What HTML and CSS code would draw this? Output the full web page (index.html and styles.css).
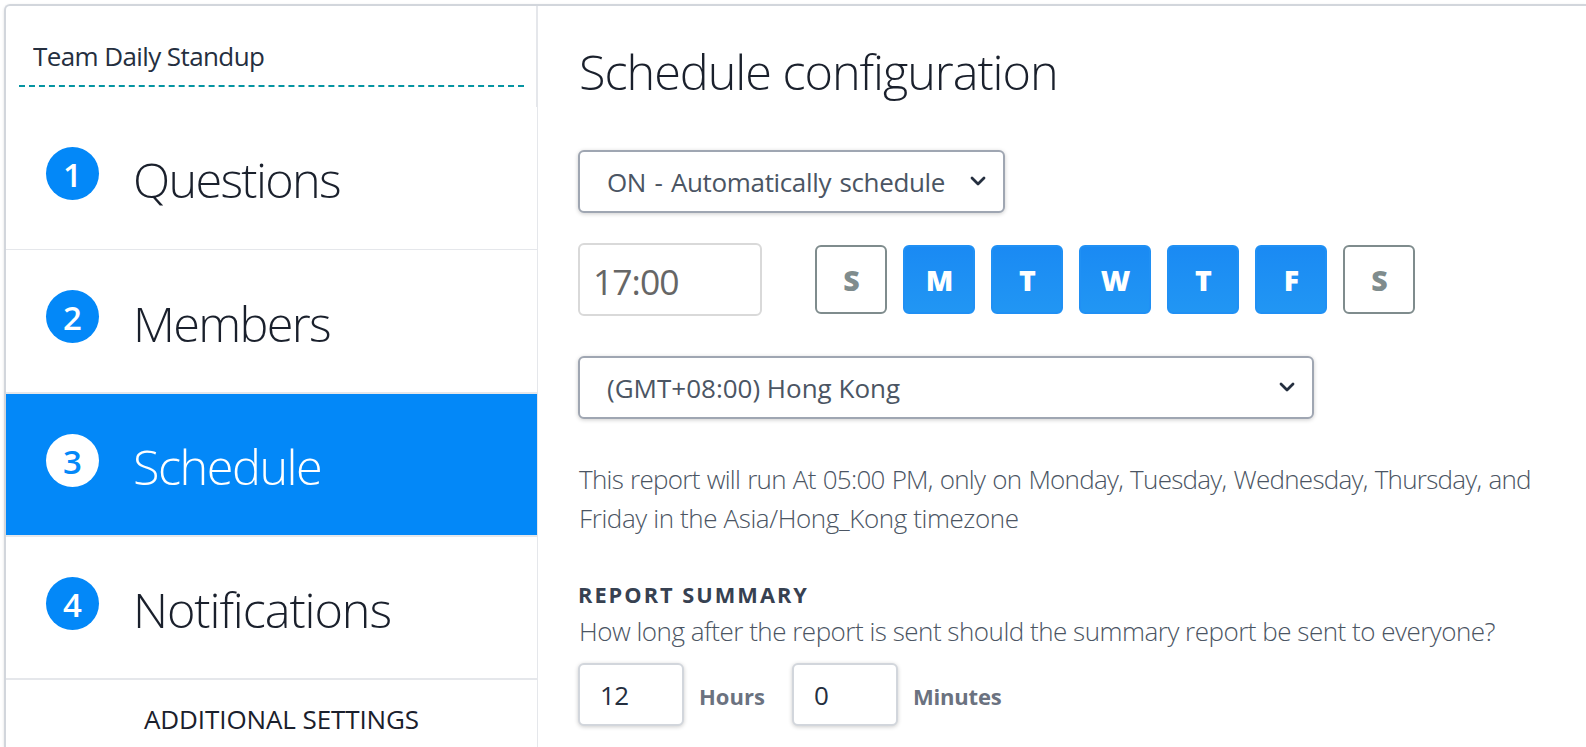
FILE: index.html
```
<!DOCTYPE html>
<html lang="en">
<head>
    <meta charset="UTF-8">
    <meta name="viewport" content="width=device-width, initial-scale=1.0">
    <title>Team Daily Standup</title>
    <link rel="stylesheet" href="styles.css">
</head>
<body>
    <div class="card">
        <div class="sidebar">
            <div class="sidebar-header">
                <input type="text" class="report-name" value="Team Daily Standup">
            </div>
            <ul class="steps">
                <li class="step">
                    <span class="step-number">1</span>
                    <span class="step-label">Questions</span>
                </li>
                <li class="step step-tall">
                    <span class="step-number">2</span>
                    <span class="step-label">Members</span>
                </li>
                <li class="step active">
                    <span class="step-number">3</span>
                    <span class="step-label">Schedule</span>
                </li>
                <li class="step step-last">
                    <span class="step-number">4</span>
                    <span class="step-label wide">Notifications</span>
                </li>
                <li class="additional">ADDITIONAL SETTINGS</li>
            </ul>
        </div>

        <div class="content">
            <h1>Schedule configuration</h1>

            <div class="select-box mode-select">
                <select>
                    <option>ON - Automatically schedule</option>
                    <option>OFF</option>
                </select>
                <svg class="chevron" viewBox="0 0 16 11"><path d="M2 2l6 6 6-6"/></svg>
            </div>

            <div class="time-row">
                <input type="text" class="time-input" value="17:00">
                <div class="days">
                    <button class="day">S</button>
                    <button class="day selected">M</button>
                    <button class="day selected">T</button>
                    <button class="day selected">W</button>
                    <button class="day selected">T</button>
                    <button class="day selected">F</button>
                    <button class="day">S</button>
                </div>
            </div>

            <div class="select-box zone-select">
                <select>
                    <option>(GMT+08:00) Hong Kong</option>
                </select>
                <svg class="chevron" viewBox="0 0 16 11"><path d="M2 2l6 6 6-6"/></svg>
            </div>

            <p class="run-info">This report will run At 05:00 PM, only on Monday, Tuesday, Wednesday, Thursday, and<br><span class="timezone">Friday in the Asia/Hong_Kong timezone</span></p>

            <h2>REPORT SUMMARY</h2>
            <p class="summary-info">How long after the report is sent should the summary report be sent to everyone?</p>
            <div class="delay-row">
                <input type="text" class="delay-input" value="12">
                <label class="hours">Hours</label>
                <input type="text" class="delay-input" value="0">
                <label>Minutes</label>
            </div>
        </div>
    </div>
</body>
</html>
```

FILE: styles.css
```
* {
    margin: 0;
    padding: 0;
    box-sizing: border-box;
    font-family: 'Open Sans', 'Noto Sans', sans-serif;
}

body {
    height: 100vh;
    padding: 4px 0 0 4px;
    background-color: #fff;
    color: #1a202c;
}

.card {
    display: flex;
    height: 100%;
    border: 2px solid #d2d6dc;
    border-right: none;
    border-bottom: none;
    border-radius: 6px 0 0 0;
    box-shadow: 0 1px 3px rgba(0, 0, 0, 0.12);
}

/* Sidebar */
.sidebar {
    display: flex;
    flex-direction: column;
    flex: none;
    width: 532px;
}

.sidebar-header {
    height: 101px;
    padding: 30px 12px 0 13px;
    border-right: 2px solid #e5e7eb;
}

.report-name {
    width: 100%;
    height: 51px;
    padding: 0 14px 10px;
    border: none;
    border-bottom: 2px dashed #0694a2;
    background: none;
    color: #252f3f;
    font-size: 26px;
    letter-spacing: -0.6px;
    outline: none;
}

.steps {
    flex: 1;
    list-style: none;
    border-right: 1px solid #e5e7eb;
}

.step {
    display: flex;
    gap: 34px;
    height: 143px;
    padding: 40px 40px 0;
    border-bottom: 1px solid #e5e7eb;
}

.step-tall {
    height: 144px;
    border-bottom-width: 2px;
}

.step-last {
    border-bottom-width: 2px;
}

.step-number {
    width: 53px;
    height: 53px;
    border-radius: 50%;
    background-color: #0388f8;
    color: #fff;
    font-size: 33px;
    font-weight: 600;
    line-height: 55px;
    text-align: center;
}

.step-label {
    padding-top: 2px;
    font-size: 48.6px;
    font-weight: 300;
    line-height: 60px;
    letter-spacing: -1.7px;
}

.step-tall .step-label {
    padding-top: 3px;
}

.step-label.wide {
    letter-spacing: -1.1px;
}

.step.active {
    background-color: #0388f8;
    background-clip: padding-box;
    border-bottom-width: 2px;
    color: #fff;
}

.step.active .step-label {
    letter-spacing: -1.5px;
}

.step.active .step-number {
    background-color: #fff;
    color: #0388f8;
}

.additional {
    padding: 20px 0 0 138px;
    font-size: 26px;
    line-height: 39px;
    letter-spacing: -0.1px;
}

/* Content */
.content {
    flex: 1;
    padding: 35px 0 0 40px;
}

h1 {
    margin-bottom: 49px;
    padding-left: 1px;
    font-size: 48.6px;
    font-weight: 300;
    line-height: 60px;
    letter-spacing: -1.05px;
}

.select-box {
    position: relative;
    height: 63px;
}

.select-box select {
    width: 100%;
    height: 100%;
    padding: 0 60px 0 27px;
    border: 2px solid #9fa6b2;
    border-radius: 6px;
    background-color: #fff;
    box-shadow: 0 1px 4px rgba(0, 0, 0, 0.2);
    color: #4b5563;
    font-size: 26px;
    appearance: none;
}

.mode-select {
    width: 427px;
}

.mode-select select {
    padding-right: 20px;
    letter-spacing: -0.35px;
    word-spacing: 2px;
}

.zone-select {
    width: 736px;
}

.chevron {
    position: absolute;
    top: 26px;
    right: 19px;
    width: 16px;
    height: 11px;
    fill: none;
    stroke: #252f3f;
    stroke-width: 2.8;
    stroke-linecap: round;
    stroke-linejoin: round;
}

.time-row {
    display: flex;
    align-items: flex-start;
    gap: 53px;
    margin: 30px 0 40px;
}

.time-input {
    width: 184px;
    height: 73px;
    padding: 2px 13px 0;
    border: 2px solid #d9d9d9;
    border-radius: 6px;
    color: #666;
    font-size: 35.5px;
    letter-spacing: -1px;
}

.days {
    display: flex;
    gap: 16px;
    padding-top: 2px;
}

.day {
    width: 72px;
    height: 69px;
    padding: 1px 0 0 1px;
    border: 2px solid #7f8c8d;
    border-radius: 6px;
    background-color: #fff;
    color: #7f8c8d;
    font-size: 28.5px;
    font-weight: 800;
}

.day.selected {
    border-color: #2090f4;
    background: linear-gradient(#1a8af3, #2196f3);
    color: #fff;
}

.run-info,
.summary-info {
    color: #4b5563;
    font-size: 26px;
    font-weight: 300;
    line-height: 39px;
    white-space: nowrap;
}

.run-info {
    margin: 41px 0 40px;
    padding-left: 1px;
    letter-spacing: -0.73px;
    word-spacing: 1px;
}

.timezone {
    letter-spacing: -0.4px;
    word-spacing: 0;
}

.summary-info {
    padding: 1px 0 12px 1px;
    letter-spacing: -0.5px;
}

h2 {
    color: #374151;
    font-size: 21.8px;
    font-weight: 700;
    line-height: 33px;
    letter-spacing: 2px;
}

.delay-row {
    display: flex;
    align-items: center;
}

.delay-input {
    width: 106px;
    height: 63px;
    margin-right: 15px;
    padding: 0 20px;
    border: 2px solid #d2d6dc;
    border-radius: 6px;
    box-shadow: 0 1px 4px rgba(0, 0, 0, 0.2);
    color: #252f3f;
    font-size: 26px;
    letter-spacing: -0.6px;
}

.delay-row label {
    padding-top: 3px;
    color: #6b7280;
    font-size: 22px;
    font-weight: 700;
    letter-spacing: -0.2px;
}

.delay-row .hours {
    width: 93px;
    letter-spacing: 0;
}
```
